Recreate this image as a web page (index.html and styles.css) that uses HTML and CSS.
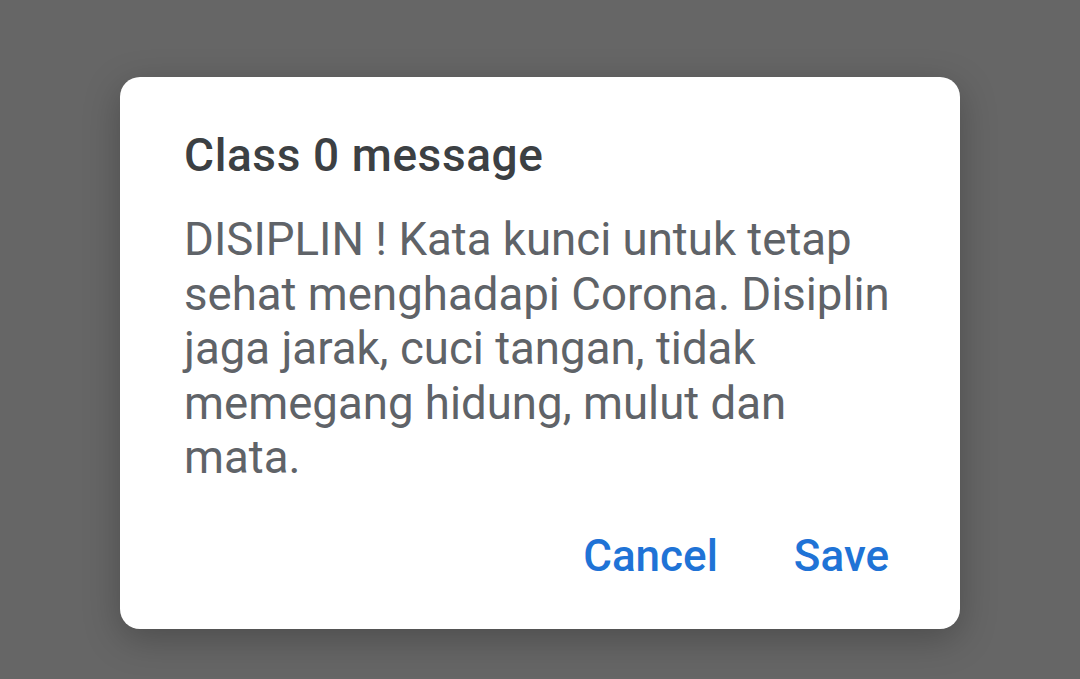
FILE: index.html
```html
<!DOCTYPE html>
<html lang="en">
<head>
    <meta charset="UTF-8">
    <title>Class 0 message</title>
    <link rel="stylesheet" href="styles.css">
</head>
<body>
    <div class="screen">
        <div class="dialog">
            <h2 class="dialog-title">Class 0 message</h2>
            <p class="dialog-body">DISIPLIN ! Kata kunci untuk tetap sehat menghadapi Corona. Disiplin jaga jarak, cuci tangan, tidak memegang hidung, mulut dan mata.</p>
            <div class="dialog-actions">
                <button class="btn">Cancel</button>
                <button class="btn">Save</button>
            </div>
        </div>
    </div>
</body>
</html>
```

FILE: styles.css
```css
body {
    margin: 0;
    padding: 0;
    background: #666;
    font-family: Roboto, "Noto Sans", sans-serif;
}
.screen {
    width: 1080px;
    height: 679px;
    padding: 77px 120px 0;
    box-sizing: border-box;
}
.dialog {
    width: 840px;
    height: 552px;
    box-sizing: border-box;
    background: #fff;
    border-radius: 20px;
    padding: 50px 50px 0 64px;
    box-shadow: 0 10px 36px rgba(0, 0, 0, 0.25);
}
.dialog-title {
    margin: 0 0 30px;
    font-size: 46px;
    font-weight: 500;
    letter-spacing: 0.6px;
    color: #3c4043;
    line-height: 56px;
    -webkit-text-stroke: 0;
}
.dialog-body {
    margin: 0;
    font-size: 45.6px;
    line-height: 54.5px;
    color: #5f6368;
}
.dialog-actions {
    display: flex;
    justify-content: flex-end;
    gap: 76px;
    margin: 42px 21px 0 0;
}
.btn {
    border: none;
    background: none;
    padding: 0;
    font-family: Roboto, sans-serif;
    font-size: 44px;
    line-height: 56px;
    font-weight: 500;
    color: #1f73d6;
}
```
